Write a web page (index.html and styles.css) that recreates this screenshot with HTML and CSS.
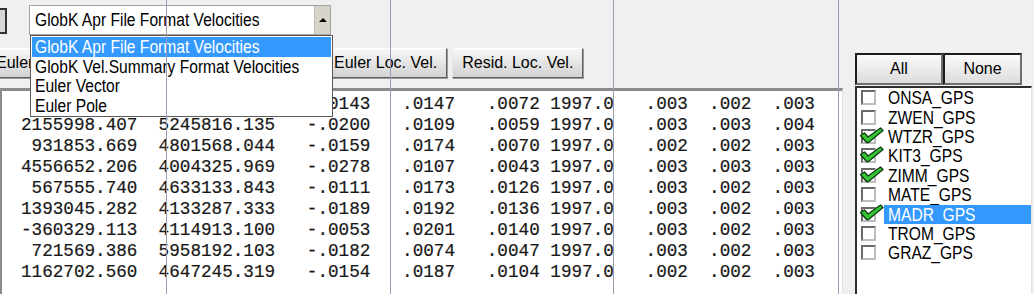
FILE: index.html
```html
<!DOCTYPE html>
<html lang="en">
<head>
    <meta charset="UTF-8">
    <title>Velocities</title>
    <link rel="stylesheet" href="styles.css">
</head>
<body>
    <div class="window">
        <div class="main">
            <div class="toolbar">
                <div class="toprow">
                    <div class="stub"></div>
                    <div class="combo">
                        <span class="combo-text"><span class="tx">GlobK Apr File Format Velocities</span></span>
                        <span class="combo-btn"><span class="arrow"></span></span>
                    </div>
                </div>
                <div class="btnrow">
                    <button class="btn w89">Euler</button>
                    <button class="btn w98"></button>
                    <button class="btn w136"></button>
                    <button class="btn">Euler Loc. Vel.</button>
                    <button class="btn">Resid. Loc. Vel.</button>
                </div>
            </div>
<pre class="data">                           -.0143   .0147   .0072 1997.0   .003  .002  .003
2155998.407  5245816.135   -.0200   .0109   .0059 1997.0   .003  .003  .004
 931853.669  4801568.044   -.0159   .0174   .0070 1997.0   .002  .002  .003
4556652.206  4004325.969   -.0278   .0107   .0043 1997.0   .003  .003  .003
 567555.740  4633133.843   -.0111   .0173   .0126 1997.0   .003  .002  .003
1393045.282  4133287.333   -.0189   .0192   .0136 1997.0   .003  .002  .003
-360329.113  4114913.100   -.0053   .0201   .0140 1997.0   .003  .002  .003
 721569.386  5958192.103   -.0182   .0074   .0047 1997.0   .003  .002  .003
1162702.560  4647245.319   -.0154   .0187   .0104 1997.0   .002  .002  .003</pre>
        </div>
        <div class="side">
            <div class="pick">
                <button class="pbtn all">All</button>
                <button class="pbtn none">None</button>
            </div>
            <ul class="sites">
                <li class="site"><span class="box"></span><span class="name"><span class="tx">ONSA_GPS</span></span></li>
                <li class="site"><span class="box"></span><span class="name"><span class="tx">ZWEN_GPS</span></span></li>
                <li class="site on"><span class="box"></span><span class="name"><span class="tx">WTZR_GPS</span></span>
                    <svg class="tick" viewBox="0 0 25 17"><path d="M1.5 8.5 L5.5 6 L9 10 L21.5 1 L24 3.5 L9.5 15.5 L7.5 15.5 Z"/></svg></li>
                <li class="site on"><span class="box"></span><span class="name"><span class="tx">KIT3_GPS</span></span>
                    <svg class="tick" viewBox="0 0 25 17"><path d="M1.5 8.5 L5.5 6 L9 10 L21.5 1 L24 3.5 L9.5 15.5 L7.5 15.5 Z"/></svg></li>
                <li class="site on"><span class="box"></span><span class="name"><span class="tx">ZIMM_GPS</span></span>
                    <svg class="tick" viewBox="0 0 25 17"><path d="M1.5 8.5 L5.5 6 L9 10 L21.5 1 L24 3.5 L9.5 15.5 L7.5 15.5 Z"/></svg></li>
                <li class="site"><span class="box"></span><span class="name"><span class="tx">MATE_GPS</span></span></li>
                <li class="site on sel"><span class="box"></span><span class="name"><span class="tx">MADR_GPS</span></span>
                    <svg class="tick" viewBox="0 0 25 17"><path d="M1.5 8.5 L5.5 6 L9 10 L21.5 1 L24 3.5 L9.5 15.5 L7.5 15.5 Z"/></svg></li>
                <li class="site"><span class="box"></span><span class="name"><span class="tx">TROM_GPS</span></span></li>
                <li class="site"><span class="box"></span><span class="name"><span class="tx">GRAZ_GPS</span></span></li>
            </ul>
        </div>
    </div>

    <ul class="droplist">
        <li class="hot"><span class="tx">GlobK Apr File Format Velocities</span></li>
        <li><span class="tx">GlobK Vel.Summary Format Velocities</span></li>
        <li><span class="tx">Euler Vector</span></li>
        <li><span class="tx">Euler Pole</span></li>
    </ul>

    <div class="guide g1"></div>
    <div class="guide g2"></div>
    <div class="guide g3"></div>
    <div class="guide g4"></div>
</body>
</html>
```

FILE: styles.css
```css
body { margin: 0; background: #f0f0f0; font-family: "Liberation Sans", Arial, sans-serif; overflow: hidden; }
.window { display: flex; width: 1034px; height: 294px; }
.main { width: 843px; display: flex; flex-direction: column; }

/* windows-ish sans is narrower and taller than Arial */
.tx { display: inline-block; transform: scaleY(1.14); }

.toolbar { height: 88px; box-sizing: border-box; padding-top: 5px; }
.toprow { display: flex; align-items: flex-start; height: 30px; }
.stub { width: 5px; height: 22px; margin-top: 3px; border: 2px solid #333; border-left: 0; background: #d6d6d6; }
.combo { display: flex; margin-left: 22px; width: 302px; height: 30px; box-sizing: border-box; border: 1px solid #a3a3a3; background: #fff; }
.combo-text { flex: 1; padding-left: 5px; font: 15.6px/28px "Liberation Sans", Arial, sans-serif; color: #000; white-space: nowrap; }
.combo-btn { width: 15px; background: #d8d4cc; border-left: 1px solid #c4c0b8; display: flex; align-items: center; justify-content: center; }
.arrow { width: 0; height: 0; border-left: 4px solid transparent; border-right: 4px solid transparent; border-bottom: 4px solid #000; }

.btnrow { display: flex; gap: 5px; margin-top: 13px; margin-left: -14px; }
.btn { flex: none; height: 30px; box-sizing: border-box; padding: 0 9px; font: 16px "Liberation Sans", Arial, sans-serif; color: #000; white-space: nowrap; text-align: left;
       background: linear-gradient(#f7f7f7, #d2d2d2); border: 1px solid; border-color: #fff #5f5f5f #5f5f5f #e8e8e8; box-shadow: 1px 1px 0 #9a9a9a; }
.w89 { width: 89px; }
.w98 { width: 98px; }
.w136 { width: 136px; }

.data { flex: 1; margin: 0; background: #fff; border-top: 3px solid #8b8b8b; border-left: 2px solid #8b8b8b; border-right: 1px solid #e2e2e2;
        padding: 3px 0 0 19px; font: 17.65px/21px "Liberation Mono", "Courier New", monospace; color: #181818;
        -webkit-text-stroke: 0.2px #181818; overflow: hidden; }

.side { flex: 1; display: flex; flex-direction: column; padding: 53px 0 0 12px; }
.pick { display: flex; height: 32px; }
.pbtn { height: 32px; box-sizing: border-box; padding: 0; font: 16px "Liberation Sans", Arial, sans-serif; color: #000;
        background: linear-gradient(#fbfbfb, #dcdcdc); border: 2px solid; border-color: #1e1e1e #6e6e6e #6e6e6e #1e1e1e; }
.all { width: 88px; }
.none { width: 79px; }

.sites { flex: 1; list-style: none; margin: 1px 0 0; padding: 0; width: 177px; box-sizing: border-box; background: #fff;
         border-left: 2px solid #2e2e2e; border-top: 2px solid #2e2e2e; border-right: 1px solid #e3e3e3; }
.site { position: relative; display: flex; align-items: center; height: 19.4px; font: 15.6px/19px "Liberation Sans", Arial, sans-serif; color: #000; }
.box { flex: none; width: 15px; height: 15px; box-sizing: border-box; margin-left: 4px; border: 2px solid; border-color: #6a6a6a #bdbdbd #bdbdbd #6a6a6a; background: #fff; }
.name { flex: 1; margin-left: 8px; padding-left: 4px; height: 19px; }
.sel .name { background: #3399ff; color: #fff; }
.tick { position: absolute; left: 2px; top: 0; width: 25px; height: 17px; }
.tick path { fill: #34c934; stroke: #123f12; stroke-width: 1.4; stroke-linejoin: round; }

.droplist { position: absolute; left: 30px; top: 35px; width: 303px; height: 82px; box-sizing: border-box; margin: 0; padding: 1px; list-style: none;
            background: #fff; border: 1px solid #5a5a5a; font: 15.6px "Liberation Sans", Arial, sans-serif; color: #000; }
.droplist li { height: 19.7px; line-height: 19.7px; padding-left: 3px; white-space: nowrap; }
.droplist .hot { background: #3399ff; color: #fff; }

.guide { position: absolute; top: 0; width: 1px; height: 294px; background: #9c9cb4; }
.g1 { left: 166px; }
.g2 { left: 390px; }
.g3 { left: 613px; }
.g4 { left: 838px; }
```
